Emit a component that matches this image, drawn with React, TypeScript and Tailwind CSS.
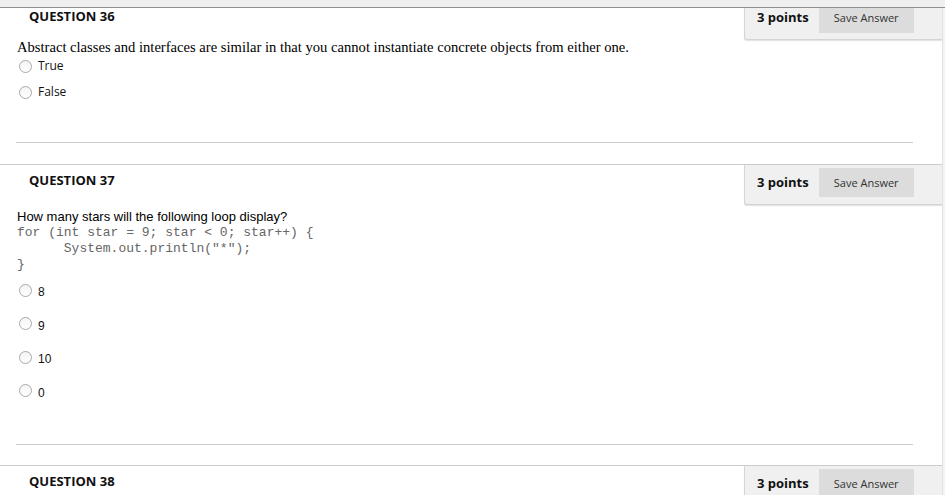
const sans = { fontFamily: '"Open Sans", "Liberation Sans", sans-serif' };

function Radio() {
  return (
    <span className="inline-block w-[13px] h-[13px] rounded-full border border-[#a9a9a9] bg-gradient-to-b from-[#f4f4f4] to-white shrink-0" />
  );
}

function PointsBox({ first }: { first?: boolean }) {
  return (
    <div
      className={`w-[198px] flex items-start bg-[#f0f0f0] border-l border-b border-[#d4d4d4] rounded-bl-[3px] shadow-[0_1px_1px_rgba(0,0,0,0.12)] pl-[12px] ${first ? 'h-[32px]' : 'h-[40px] pt-[3px]'}`}
      style={sans}
    >
      <span className={`font-bold text-[13px] text-[#111] ${first ? 'leading-[18px]' : 'leading-[29px]'}`}>3 points</span>
      <button
        className={`ml-[10px] w-[95px] bg-[#dcdcdc] text-[11px] text-[#333] ${first ? 'h-[25px] pb-[5px] leading-[20px]' : 'h-[29px] leading-[29px]'}`}
      >
        Save Answer
      </button>
    </div>
  );
}

function Header({ n, first }: { n: number; first?: boolean }) {
  return (
    <div className="flex justify-between items-start">
      <div
        className={`pl-[29px] font-bold text-[13px] text-[#111] ${first ? 'leading-[16px]' : 'pt-[6px] leading-[18px]'}`}
        style={sans}
      >
        QUESTION {n}
      </div>
      <PointsBox first={first} />
    </div>
  );
}

export default function App() {
  const choices = ['8', '9', '10', '0'];
  return (
    <div className="w-[945px] h-[495px] overflow-hidden bg-white">
      <div className="h-[7px] bg-[#efefef] border-b border-[#8f8f8f] box-content" />
      <div className="flex">
        <div className="w-[942px]">
          {/* Question 36 */}
          <Header n={36} first />
          <p className="pl-[17px] text-[14.6px] leading-[15px] text-black" style={{ fontFamily: '"Liberation Serif", serif' }}>
            Abstract classes and interfaces are similar in that you cannot instantiate concrete objects from either one.
          </p>
          <div className="pl-[19px] mt-[3px] flex flex-col gap-[10px]" style={sans}>
            {['True', 'False'].map((c) => (
              <label key={c} className="h-[16px] flex items-center gap-[6px] text-[12px] text-[#111]">
                <Radio />
                <span>{c}</span>
              </label>
            ))}
          </div>
          <div className="mt-[42px] ml-[16px] w-[897px] border-t border-[#cccccc]" />

          {/* Question 37 */}
          <div className="mt-[21px] border-t border-[#cccccc]" />
          <Header n={37} />
          <p className="mt-[4px] pl-[17px] text-[13px] leading-[16px] text-black" style={{ fontFamily: '"Liberation Sans", Arial, sans-serif' }}>
            How many stars will the following loop display?
          </p>
          <pre className="pl-[17px] text-[13px] leading-[16px] text-[#666]" style={{ fontFamily: '"Liberation Mono", monospace' }}>
{`for (int star = 9; star < 0; star++) {
      System.out.println("*");
}`}
          </pre>
          <div className="pl-[19px] mt-[9px] flex flex-col gap-[17.5px]" style={{ fontFamily: '"Liberation Sans", Arial, sans-serif' }}>
            {choices.map((c) => (
              <label key={c} className="h-[16px] flex items-center gap-[6px] text-[12px] text-[#111]">
                <Radio />
                <span className="pt-[4px]">{c}</span>
              </label>
            ))}
          </div>
          <div className="mt-[45px] ml-[16px] w-[897px] border-t border-[#cccccc]" />

          {/* Question 38 */}
          <div className="mt-[20px] border-t border-[#cccccc]" />
          <Header n={38} />
        </div>
        <div className="flex-1 bg-[#f3f3f3] border-l border-[#e2e2e2]" />
      </div>
    </div>
  );
}
